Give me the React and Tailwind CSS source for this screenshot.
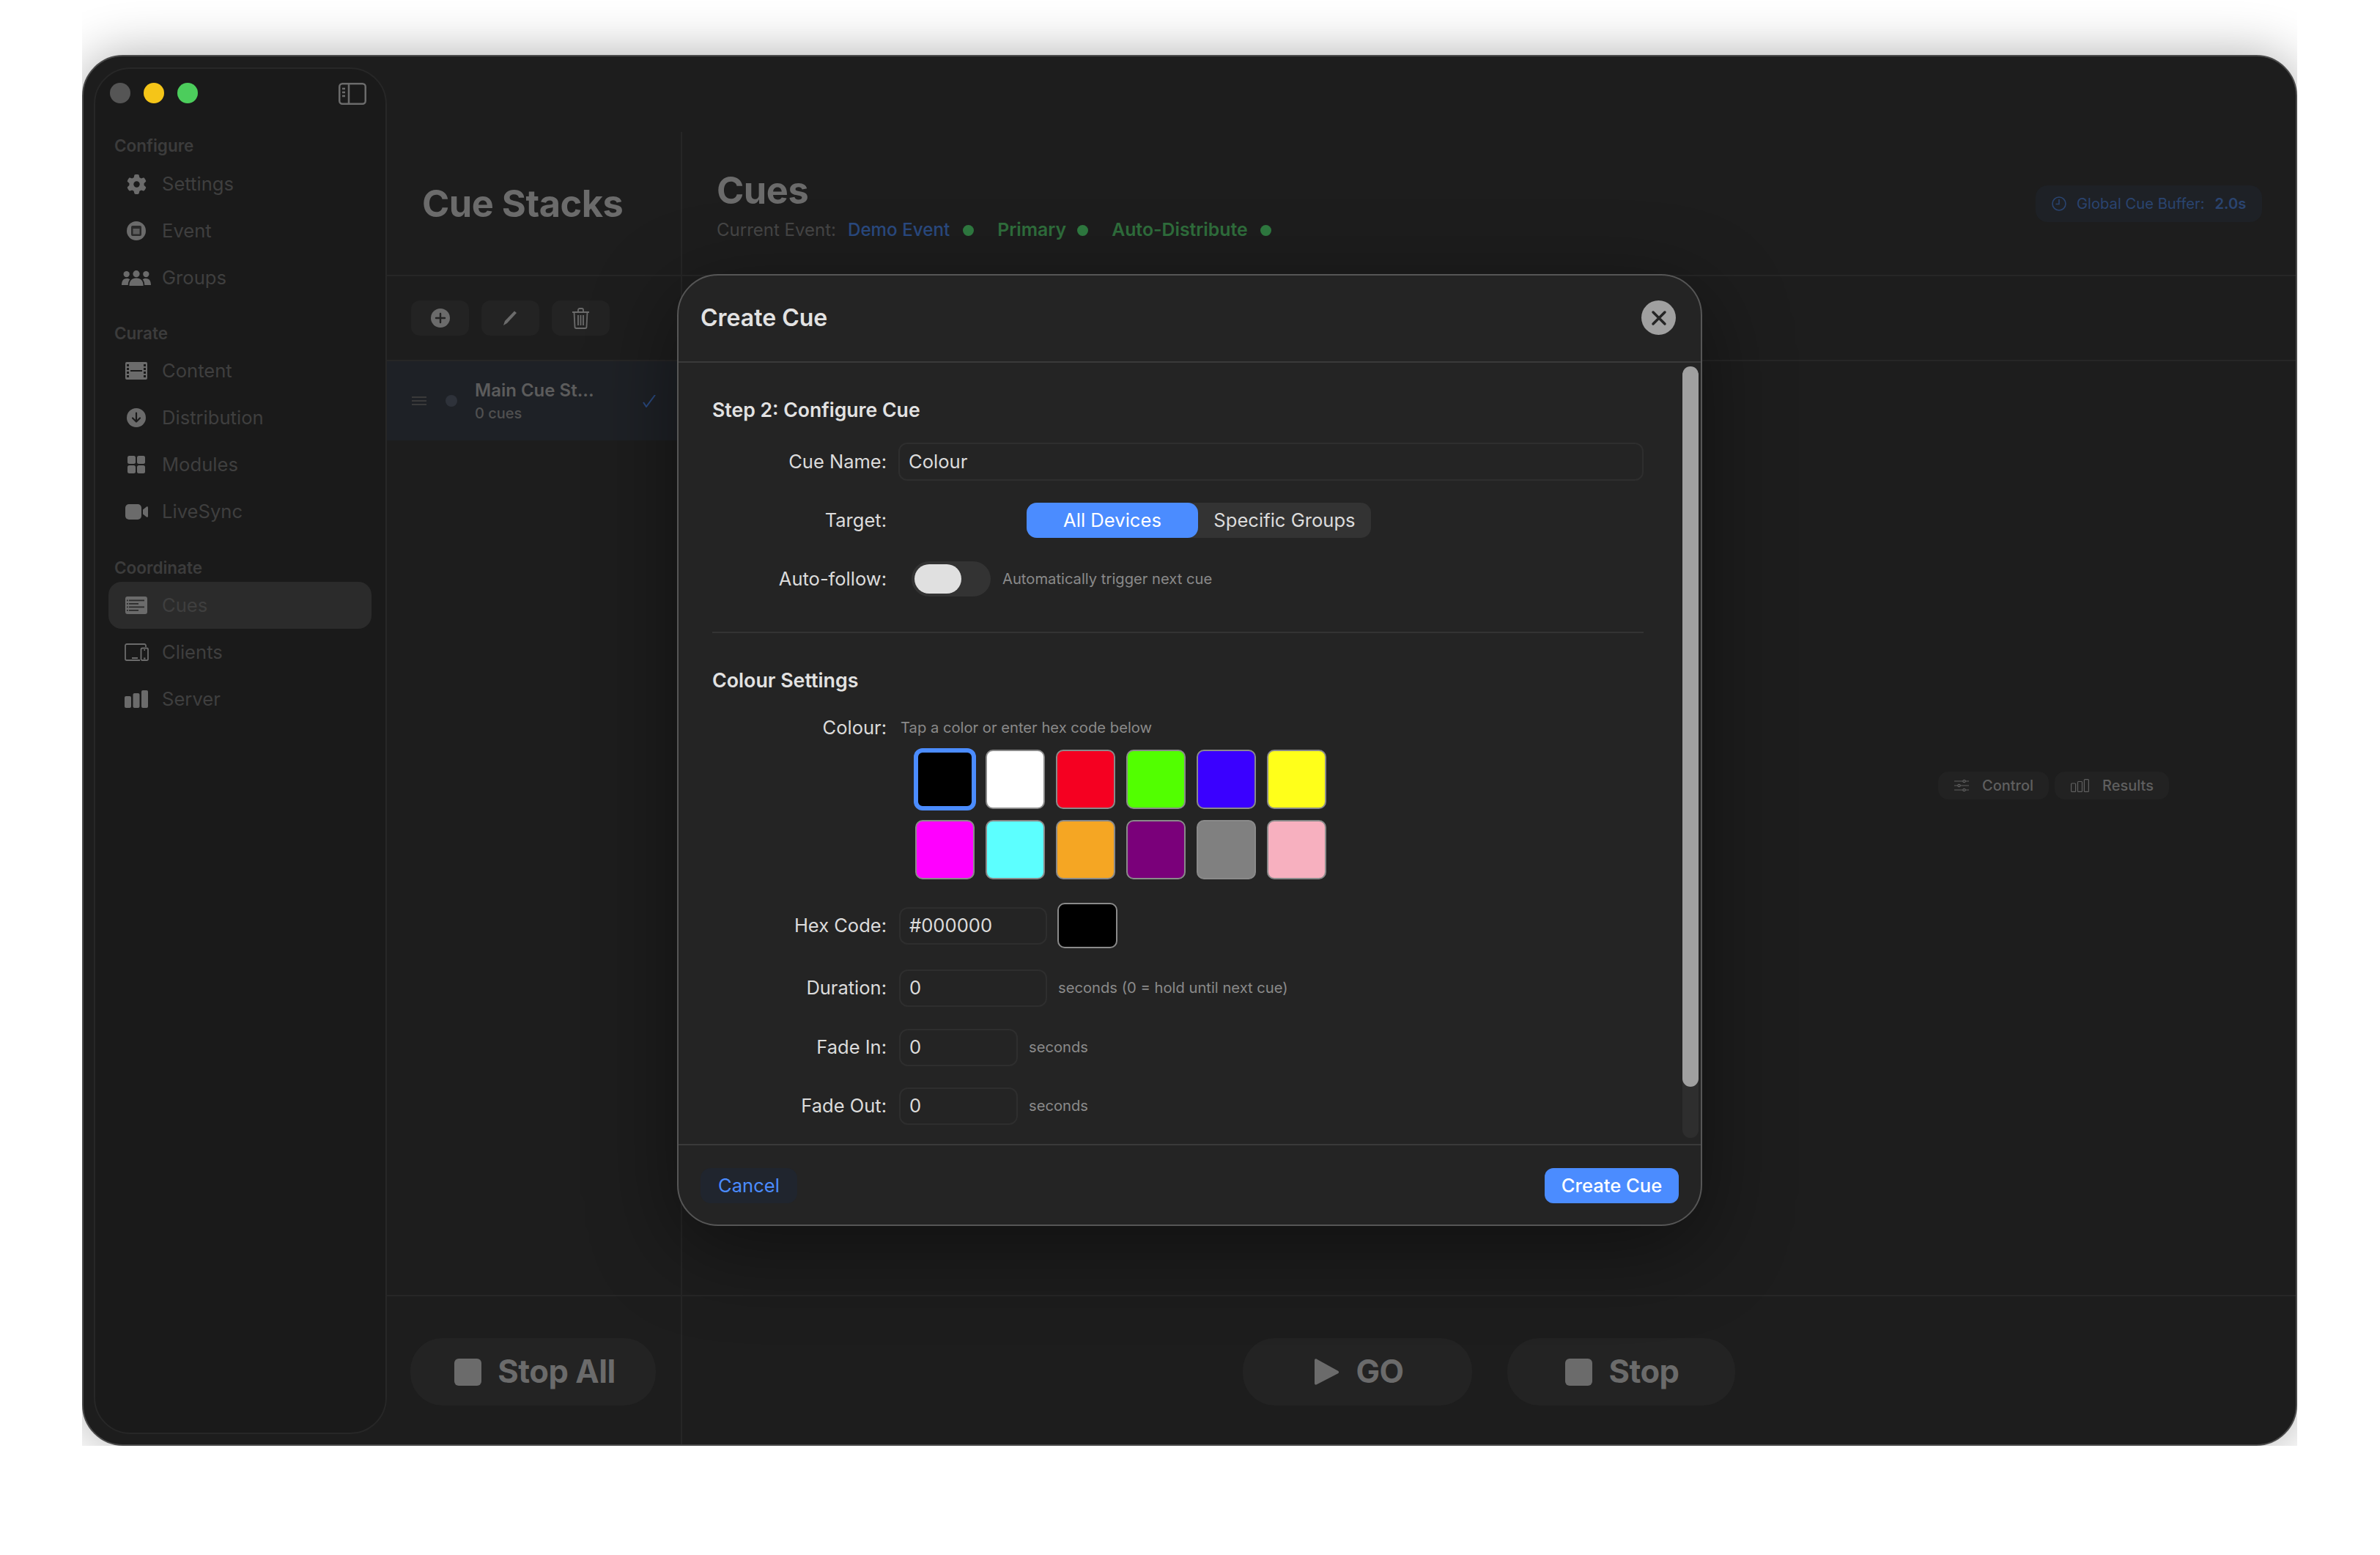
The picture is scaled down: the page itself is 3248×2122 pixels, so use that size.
import React from 'react';
import { FaGear } from 'react-icons/fa6';

const ICON = '#6b6b6b';
const BG = '#1a1a1a';

function EventIcon() {
  return (
    <svg width="26" height="26" viewBox="0 0 26 26">
      <circle cx="13" cy="13" r="13" fill={ICON} />
      <rect x="6" y="6" width="14" height="14" rx="2" fill="#2a2a2a" />
      <rect x="8.500" y="10" width="9" height="7.500" fill="#5c5c5c" />
    </svg>
  );
}

function GroupsIcon() {
  return (
    <svg width="48" height="25" viewBox="0 0 48 25" fill={ICON}>
      <circle cx="8" cy="6" r="5" />
      <circle cx="40" cy="6" r="5" />
      <circle cx="24" cy="5.500" r="5.500" />
      <path d="M0 24c0-6 2-11 8.500-11 2 0 3.500.5 5 1.500-2 2.500-3 5.500-3 9.500H0z" />
      <path d="M48 24c0-6-2-11-8.500-11-2 0-3.500.5-5 1.500 2 2.500 3 5.500 3 9.500H48z" />
      <path d="M12.500 25c0-8 4-12.500 11.500-12.500S35.500 17 35.500 25h-23z" />
    </svg>
  );
}

function ContentIcon() {
  return (
    <svg width="30" height="24" viewBox="0 0 30 24">
      <rect width="30" height="24" rx="2" fill={ICON} />
      <g fill={BG}>
        <rect x="2" y="3" width="3" height="3" /><rect x="2" y="8" width="3" height="3" /><rect x="2" y="13" width="3" height="3" /><rect x="2" y="18" width="3" height="3" />
        <rect x="25" y="3" width="3" height="3" /><rect x="25" y="8" width="3" height="3" /><rect x="25" y="13" width="3" height="3" /><rect x="25" y="18" width="3" height="3" />
        <rect x="7" y="11" width="16" height="2" />
      </g>
    </svg>
  );
}

function DistributionIcon() {
  return (
    <svg width="26" height="26" viewBox="0 0 26 26">
      <circle cx="13" cy="13" r="13" fill={ICON} />
      <path d="M13 6.500v12M8 13.500l5 5 5-5" fill="none" stroke={BG} strokeWidth="2.200" strokeLinecap="round" strokeLinejoin="round" />
    </svg>
  );
}

function ModulesIcon() {
  return (
    <svg width="24" height="24" viewBox="0 0 24 24" fill={ICON}>
      <rect width="11" height="11" rx="2.500" />
      <rect x="13" width="11" height="11" rx="2.500" />
      <rect y="13" width="11" height="11" rx="2.500" />
      <rect x="13" y="13" width="11" height="11" rx="2.500" />
    </svg>
  );
}

function LiveSyncIcon() {
  return (
    <svg width="31" height="21" viewBox="0 0 31 21" fill={ICON}>
      <rect width="22" height="21" rx="5" />
      <path d="M24 7.500 29 3.500c.8-.6 2-.1 2 1v12c0 1.100-1.200 1.600-2 1l-5-4z" />
    </svg>
  );
}

function CuesIcon() {
  return (
    <svg width="30" height="24" viewBox="0 0 30 24">
      <rect width="30" height="24" rx="3" fill={ICON} />
      <g fill="#2b2b2b">
        <rect x="5" y="4.500" width="21" height="1.800" /><rect x="5" y="9" width="13" height="1.800" /><rect x="5" y="13.500" width="21" height="1.800" /><rect x="5" y="18" width="13" height="1.800" />
        <rect x="2" y="4.500" width="1.800" height="1.800" /><rect x="2" y="9" width="1.800" height="1.800" /><rect x="2" y="13.500" width="1.800" height="1.800" /><rect x="2" y="18" width="1.800" height="1.800" />
      </g>
    </svg>
  );
}

function ClientsIcon() {
  return (
    <svg width="33" height="24" viewBox="0 0 33 24" fill="none" stroke={ICON} strokeWidth="1.800">
      <path d="M29 5V3a2 2 0 0 0-2-2H3a2 2 0 0 0-2 2v18a2 2 0 0 0 2 2h18" />
      <rect x="22.500" y="6.500" width="9.500" height="16.500" rx="1.800" />
      <path d="M10 20h8M26 20.500h2.500M26.500 9h1.500" />
    </svg>
  );
}

function ServerIcon() {
  return (
    <svg width="32" height="24" viewBox="0 0 32 24" fill={ICON}>
      <rect y="8" width="9" height="16" rx="2" />
      <rect x="11.500" y="4" width="9" height="20" rx="2" />
      <rect x="23" width="9" height="24" rx="2" />
    </svg>
  );
}

function NavItem({ icon, label, active }) {
  return (
    <div className={`flex h-[64px] items-center gap-[15px] rounded-[18px] pl-[18px] text-[25.600px] text-[#3f3f3f] ${active ? 'bg-[#2b2b2b]' : ''}`}>
      <span className="flex w-[40px] items-center justify-center">{icon}</span>
      <span>{label}</span>
    </div>
  );
}

function Dot({ className }) {
  return <span className={`block h-[15px] w-[15px] rounded-full bg-[#2f7a40] ${className}`} />;
}

function ToolButton({ children }) {
  return <div className="flex h-[48px] w-[79px] items-center justify-center rounded-[12px] bg-[#232323]">{children}</div>;
}

function BigButton({ children, className }) {
  return (
    <div className={`flex h-[92px] items-center justify-center gap-[22px] rounded-[44px] bg-[#232323] text-[43.500px] font-bold tracking-[-0.5px] text-[#6b6b6b] ${className}`}>
      {children}
    </div>
  );
}

function StopSquare() {
  return <span className="h-[37px] w-[37px] rounded-[6px] bg-[#6b6b6b]" />;
}

function Label({ children }) {
  return <span className="w-[238px] text-right text-[25.500px] text-[#dcdcdc]">{children}</span>;
}

function Field({ value, className }) {
  return (
    <div className={`flex h-[51px] items-center rounded-[12px] border-2 border-[#2e2e2e] pl-[12px] text-[25.600px] text-[#dcdcdc] ${className}`}>
      {value}
    </div>
  );
}

function Hint({ children }) {
  return <span className="text-[20.200px] text-[#8a8a8a]">{children}</span>;
}

function Swatch({ color, selected }) {
  return (
    <div
      className={selected
        ? 'h-[81px] w-[81px] rounded-[10px] border-[4px] border-[#4b8cff] shadow-[0_0_0_2px_#4b8cff]'
        : 'h-[81px] w-[81px] rounded-[10px] border-2 border-[#8a8a8a]'}
      style={{ backgroundColor: color }}
    />
  );
}

const swatches = ['#000000', '#ffffff', '#f50021', '#52ff00', '#3a00ff', '#ffff1a', '#ff00ff', '#5cffff', '#f5a623', '#7a007a', '#808080', '#f7b0bf'];

function CreateCueModal() {
  return (
    <div className="absolute left-[810px] top-[297px] flex h-[1299px] w-[1399px] flex-col rounded-[56px] border-2 border-[#565656] bg-[#242424] shadow-[0_30px_120px_rgba(0,0,0,0.45)]">
      {/* Header */}
      <div className="flex h-[119px] items-center justify-between border-b-2 border-[#3a3a3a] pb-[2px] pl-[30px] pr-[34px]">
        <span className="text-[32px] font-semibold text-[#e2e2e2]">Create Cue</span>
        <span className="flex h-[47px] w-[47px] items-center justify-center rounded-full bg-[#a0a0a0]">
          <svg width="22" height="22" viewBox="0 0 22 22" stroke="#242424" strokeWidth="3.500" strokeLinecap="round">
            <path d="M3 3l16 16M19 3 3 19" />
          </svg>
        </span>
      </div>

      {/* Body */}
      <div className="relative flex-1 pl-[46px] pr-[78px] pt-[48px]">
        {/* Scrollbar */}
        <div className="absolute right-[3px] top-[5px] h-[1053px] w-[22px] rounded-full bg-[#2e2e2e]">
          <div className="h-[983px] w-[22px] rounded-full bg-[#a0a0a0]" />
        </div>

        <div className="h-[32px] text-[26.600px] font-semibold leading-[32px] text-[#e2e2e2]">Step 2: Configure Cue</div>

        <div className="mt-[29px] flex h-[52px] items-center gap-[16px]">
          <Label>Cue Name:</Label>
          <Field value="Colour" className="h-[52px] flex-1" />
        </div>

        <div className="mt-[30px] flex h-[48px] items-center">
          <Label>Target:</Label>
          <div className="ml-[191px] flex h-[48px] w-[470px] items-center rounded-[14px] bg-[#333333] text-[25.600px]">
            <span className="flex h-[48px] w-[234px] items-center justify-center rounded-[14px] bg-[#4b8cff] text-white">All Devices</span>
            <span className="flex-1 text-center text-[#dcdcdc]">Specific Groups</span>
          </div>
        </div>

        <div className="mt-[32px] flex h-[48px] items-center">
          <Label>Auto-follow:</Label>
          <div className="ml-[34px] flex h-[48px] w-[108px] items-center rounded-full bg-[#333333] pl-[4px]">
            <span className="h-[40px] w-[64px] rounded-full bg-[#e0e0e0]" />
          </div>
          <span className="ml-[16px]"><Hint>Automatically trigger next cue</Hint></span>
        </div>

        <div className="mt-[48px] h-[2px] bg-[#333333]" />

        <div className="mt-[48px] h-[32px] text-[26.800px] font-semibold leading-[32px] text-[#e2e2e2]">Colour Settings</div>

        <div className="mt-[33px] flex h-[32px] items-center gap-[19px]">
          <Label>Colour:</Label>
          <Hint>Tap a color or enter hex code below</Hint>
        </div>

        <div className="ml-[277px] mt-[14px] grid w-[561px] grid-cols-[repeat(6,81px)] gap-x-[15px] gap-y-[15px]">
          {swatches.map((color, i) => <Swatch key={color} color={color} selected={i === 0} />)}
        </div>

        <div className="mt-[32px] flex h-[62px] items-center">
          <Label>Hex Code:</Label>
          <Field value="#000000" className="ml-[17px] w-[202px]" />
          <div className="ml-[14px] h-[62px] w-[82px] rounded-[10px] border-2 border-[#8a8a8a] bg-black" />
        </div>

        <div className="mt-[29px] flex h-[51px] items-center">
          <Label>Duration:</Label>
          <Field value="0" className="ml-[17px] w-[202px]" />
          <span className="ml-[15px]"><Hint>seconds (0 = hold until next cue)</Hint></span>
        </div>

        <div className="mt-[30px] flex h-[51px] items-center">
          <Label>Fade In:</Label>
          <Field value="0" className="ml-[17px] w-[162px]" />
          <span className="ml-[15px]"><Hint>seconds</Hint></span>
        </div>

        <div className="mt-[29px] flex h-[51px] items-center">
          <Label>Fade Out:</Label>
          <Field value="0" className="ml-[17px] w-[162px]" />
          <span className="ml-[15px]"><Hint>seconds</Hint></span>
        </div>
      </div>

      {/* Footer */}
      <div className="flex h-[110px] items-center justify-between border-t-2 border-[#3a3a3a] pl-[30px] pr-[30px] pt-[2px] text-[25.600px]">
        <span className="flex h-[48px] w-[132px] items-center justify-center rounded-[14px] bg-[#20252e] text-[#4b8cff]">Cancel</span>
        <span className="flex h-[48px] w-[183px] items-center justify-center rounded-[12px] bg-[#4b8cff] font-medium text-white">Create Cue</span>
      </div>
    </div>
  );
}

export default function App() {
  return (
    <div className="h-[2122px] w-[3248px] overflow-hidden bg-white pl-[112px] font-['Inter',sans-serif]">
      {/* Clipped frame: the window shadow only shows above the window */}
      <div className="h-[1973px] w-[3023px] overflow-hidden bg-white pt-[75px]">
        <div className="relative flex h-[1898px] w-[3023px] rounded-[56px] border-2 border-[#4a4a4a] bg-[#1d1d1d] shadow-[0_0_70px_rgba(0,0,0,0.32)]">
          {/* Sidebar */}
          <div className="w-[414px] shrink-0 pb-[14px] pl-[14px] pt-[15px]">
            <div className="h-full rounded-[50px] border-2 border-[#272727] bg-[#1a1a1a]">
              <div className="flex h-[69px] items-start justify-between pl-[20px] pr-[26px] pt-[19px]">
                <div className="flex gap-[18px]">
                  <span className="h-[28px] w-[28px] rounded-full bg-[#555555]" />
                  <span className="h-[28px] w-[28px] rounded-full bg-[#f5c518]" />
                  <span className="h-[28px] w-[28px] rounded-full bg-[#4ccd5c]" />
                </div>
                <svg width="38" height="30" viewBox="0 0 38 30" fill="none" stroke="#6b6b6b" strokeWidth="2.500">
                  <rect x="1.250" y="1.250" width="35.500" height="27.500" rx="4" />
                  <path d="M14 1v28M5 8h4M5 13h4M5 18h4" />
                </svg>
              </div>

              <div className="mt-[22px] h-[28px] pl-[26px] text-[22.500px] font-semibold leading-[28px] text-[#3c3c3c]">Configure</div>
              <div className="ml-[18px] mr-[19px] mt-[6px]">
                <NavItem label="Settings" icon={<FaGear size={27} color={ICON} />} />
                <NavItem label="Event" icon={<EventIcon />} />
                <NavItem label="Groups" icon={<GroupsIcon />} />
              </div>

              <div className="mt-[30px] h-[28px] pl-[26px] text-[22.500px] font-semibold leading-[28px] text-[#3c3c3c]">Curate</div>
              <div className="ml-[18px] mr-[19px] mt-[5px]">
                <NavItem label="Content" icon={<ContentIcon />} />
                <NavItem label="Distribution" icon={<DistributionIcon />} />
                <NavItem label="Modules" icon={<ModulesIcon />} />
                <NavItem label="LiveSync" icon={<LiveSyncIcon />} />
              </div>

              <div className="mt-[31px] h-[28px] pl-[26px] text-[22.500px] font-semibold leading-[28px] text-[#3c3c3c]">Coordinate</div>
              <div className="ml-[18px] mr-[19px] mt-[5px]">
                <NavItem label="Cues" active icon={<CuesIcon />} />
                <NavItem label="Clients" icon={<ClientsIcon />} />
                <NavItem label="Server" icon={<ServerIcon />} />
              </div>
            </div>
          </div>

          {/* Main */}
          <div className="flex min-w-0 flex-1 flex-col">
            {/* Titles */}
            <div className="flex h-[300px] border-b-2 border-[#262626]">
              <div className="flex w-[401px] items-center pl-[48px] pt-[104px] text-[50.500px] font-bold tracking-[-0.5px] text-[#6b6b6b]">Cue Stacks</div>
              <div className="mt-[103px] flex flex-1 justify-between border-l-2 border-[#262626] pl-[47px] pr-[46px]">
                <div>
                  <div className="mt-[49px] h-[62px] text-[50.500px] font-bold leading-[62px] tracking-[-0.5px] text-[#6b6b6b]">Cues</div>
                  <div className="mt-[8px] flex h-[30px] items-center text-[24px]">
                    <span className="text-[#464646]">Current Event:</span>
                    <span className="ml-[16px] text-[24.200px] font-medium text-[#2a4a80]">Demo Event</span>
                    <Dot className="ml-[18px]" />
                    <span className="ml-[32px] text-[24.800px] font-semibold text-[#2f6e3c]">Primary</span>
                    <Dot className="ml-[15px]" />
                    <span className="ml-[32px] text-[24.800px] font-semibold text-[#2f6e3c]">Auto-Distribute</span>
                    <Dot className="ml-[17px]" />
                  </div>
                </div>
                <div className="mt-[73px] flex h-[50px] w-[309px] items-center gap-[14px] rounded-[16px] bg-[#1e2126] pl-[22px] text-[20.200px] text-[#2a4470]">
                  <svg width="20" height="20" viewBox="0 0 20 20" fill="none" stroke="#2a4470" strokeWidth="1.600">
                    <circle cx="10" cy="10" r="9" />
                    <path d="M10 4v6.500H5.500" />
                  </svg>
                  <span>Global Cue Buffer:</span>
                  <span className="font-semibold">2.0s</span>
                </div>
              </div>
            </div>

            {/* Toolbar */}
            <div className="flex h-[116px] border-b-2 border-[#262626]">
              <div className="flex w-[401px] gap-[17px] pl-[33px] pt-[33px]">
                <ToolButton>
                  <svg width="26" height="26" viewBox="0 0 26 26">
                    <circle cx="13" cy="13" r="13" fill={ICON} />
                    <path d="M13 7v12M7 13h12" stroke="#232323" strokeWidth="2.400" strokeLinecap="round" />
                  </svg>
                </ToolButton>
                <ToolButton>
                  <svg width="22" height="22" viewBox="0 0 22 22">
                    <path d="M1 21 3 15 16 1.500l3 2.500L6 18z" fill={ICON} />
                  </svg>
                </ToolButton>
                <ToolButton>
                  <svg width="25" height="29" viewBox="0 0 25 29" fill="none" stroke={ICON} strokeWidth="1.800">
                    <path d="M1 6h23M9 6V3a2 2 0 0 1 2-2h3a2 2 0 0 1 2 2v3M3.500 6l1 20a2 2 0 0 0 2 2h12a2 2 0 0 0 2-2l1-20" />
                    <path d="M9 10v14M12.500 10v14M16 10v14" />
                  </svg>
                </ToolButton>
              </div>
              <div className="flex-1 border-l-2 border-[#262626]" />
            </div>

            {/* List and control tabs */}
            <div className="flex flex-1 border-b-2 border-[#262626]">
              <div className="w-[401px]">
                <div className="flex h-[108px] items-center bg-[#1e2126] pl-[34px]">
                  <span className="flex w-[20px] flex-col gap-[3px]">
                    <span className="h-[2px] bg-[#3a3a3a]" />
                    <span className="h-[2px] bg-[#3a3a3a]" />
                    <span className="h-[2px] bg-[#3a3a3a]" />
                  </span>
                  <span className="ml-[26px] h-[16px] w-[16px] rounded-full bg-[#2e323a]" />
                  <div className="ml-[24px] w-[229px]">
                    <div className="text-[24px] font-semibold leading-[30px] text-[#5c5c5c]">Main Cue St...</div>
                    <div className="mt-[3px] text-[20px] font-medium leading-[26px] text-[#505050]">0 cues</div>
                  </div>
                  <svg width="18" height="17" viewBox="0 0 18 17" fill="none" stroke="#2a4a80" strokeWidth="2">
                    <path d="M1 10l4 6L17 0" />
                  </svg>
                </div>
              </div>
              <div className="flex flex-1 items-start justify-end gap-[8px] border-l-2 border-[#262626] pr-[173px] pt-[560px]">
                <div className="flex h-[38px] w-[151px] items-center gap-[18px] rounded-[14px] bg-[#222222] pl-[22px] text-[20px] font-medium text-[#5f5f5f]">
                  <svg width="20" height="16" viewBox="0 0 20 16" fill="none" stroke="#5f5f5f" strokeWidth="1.200">
                    <path d="M0 2h12M15 2h5M0 8h5M8 8h12M0 14h12M15 14h5" />
                    <circle cx="13.500" cy="2" r="1.600" /><circle cx="6.500" cy="8" r="1.600" /><circle cx="13.500" cy="14" r="1.600" />
                  </svg>
                  <span>Control</span>
                </div>
                <div className="flex h-[38px] w-[156px] items-center gap-[18px] rounded-[14px] bg-[#222222] pl-[22px] text-[20px] font-medium text-[#5f5f5f]">
                  <svg width="25" height="18" viewBox="0 0 25 18" fill="none" stroke="#5f5f5f" strokeWidth="1.200">
                    <rect x="0.600" y="6" width="6" height="11.400" rx="1" />
                    <rect x="9.500" y="3.500" width="6" height="13.900" rx="1" />
                    <rect x="18.400" y="0.600" width="6" height="16.800" rx="1" />
                  </svg>
                  <span>Results</span>
                </div>
              </div>
            </div>

            {/* Transport */}
            <div className="flex h-[202px]">
              <div className="w-[401px] pl-[32px] pt-[57px]">
                <BigButton className="w-[335px] pl-[5px]"><StopSquare /><span>Stop All</span></BigButton>
              </div>
              <div className="flex flex-1 justify-center gap-[48px] border-l-2 border-[#262626] pt-[57px]">
                <BigButton className="w-[313px] pl-[3px]">
                  <svg width="36" height="38" viewBox="0 0 36 38"><path d="M2 3.500c0-2 1.500-2.800 3-1.800l29 16c1.500 1 1.500 2.600 0 3.600l-29 15c-1.500 1-3 .2-3-1.800z" fill="#6b6b6b" /></svg>
                  <span>GO</span>
                </BigButton>
                <BigButton className="w-[311px] pl-[3px]"><StopSquare /><span>Stop</span></BigButton>
              </div>
            </div>
          </div>

          <CreateCueModal />
        </div>
      </div>
    </div>
  );
}
